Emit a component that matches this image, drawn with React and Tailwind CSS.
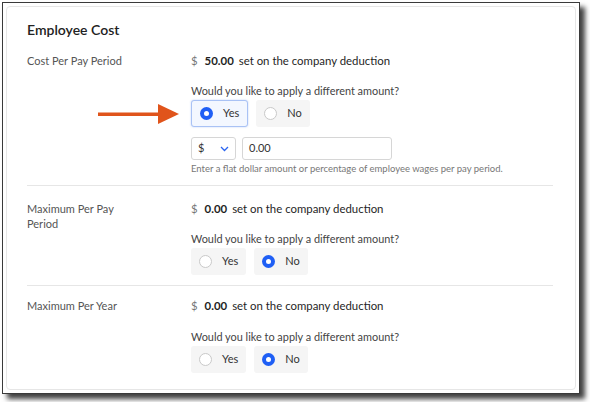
import React from "react";

const sections = [
  { label: "Cost Per Pay Period", amount: "50.00", choice: "yes", custom: true },
  { label: "Maximum Per Pay Period", amount: "0.00", choice: "no" },
  { label: "Maximum Per Year", amount: "0.00", choice: "no" },
];

function Radio({ checked }) {
  return checked ? (
    <span className="w-[13px] h-[13px] rounded-full bg-[#1f5ff5] flex items-center justify-center">
      <span className="w-[5px] h-[5px] rounded-full bg-white"></span>
    </span>
  ) : (
    <span className="w-[13px] h-[13px] rounded-full border border-[#c9c9c9] bg-white"></span>
  );
}

function Option({ text, checked, focused }) {
  return (
    <div
      className={`h-[27px] flex items-center gap-[10px] rounded-[3px] ${
        focused
          ? "pl-[8px] pr-[8px] bg-[#f3f7ff] border border-[#a9c2f5] shadow-[0_0_2px_rgba(60,110,230,0.35)]"
          : "pl-[8px] pr-[8px] bg-[#f5f5f5]"
      }`}
    >
      <Radio checked={checked} />
      <span className="text-[11px] text-[#333]">{text}</span>
    </div>
  );
}

function Section({ s, first, last }) {
  return (
    <div
      className={`flex ${first ? "pt-[14px]" : last ? "pt-[12px]" : "pt-[15px]"} pb-[10px] ${
        last ? "" : "border-b border-[#e6e6e6]"
      }`}
    >
      <div className="w-[164px] text-[11px] leading-[15px] text-[#555] pr-[60px]">{s.label}</div>
      <div className="flex-1">
        <div className="flex items-center h-[15px] text-[11.4px] text-[#1f1f1f]">
          <span className="text-[#777] mr-[7px]">$</span>
          <span className="font-bold mr-[5px]">{s.amount}</span>
          <span>set on the company deduction</span>
        </div>
        <div className={`${last ? "mt-[17px]" : "mt-[16px]"} text-[10.9px] text-[#444] leading-[14px]`}>
          Would you like to apply a different amount?
        </div>
        <div className="mt-[2px] flex gap-[8px]">
          <Option text="Yes" checked={s.choice === "yes"} focused={s.choice === "yes"} />
          <Option text="No" checked={s.choice === "no"} />
        </div>
        {s.custom && (
          <div className="mt-[10px]">
            <div className="flex gap-[6px]">
              <div className="w-[45px] h-[23px] border border-[#d6d6d6] rounded-[3px] flex items-center justify-between px-[6px] text-[11px] text-[#333]">
                <span>$</span>
                <svg width="9" height="6" viewBox="0 0 9 6" fill="none">
                  <path d="M1 1l3.5 3.5L8 1" stroke="#2a64f0" strokeWidth="1.3" />
                </svg>
              </div>
              <div className="w-[150px] h-[23px] border border-[#d6d6d6] rounded-[3px] flex items-center px-[6px] text-[11px] text-[#333]">0.00</div>
            </div>
            <div className="mt-[2px] text-[9.5px] leading-[13px] text-[#777]">
              Enter a flat dollar amount or percentage of employee wages per pay period.
            </div>
          </div>
        )}
      </div>
    </div>
  );
}

export default function App() {
  return (
    <div className="w-[590px] h-[402px] bg-white pl-[2px] pt-[2px] font-['Lato','Liberation_Sans',sans-serif]">
      <div className="relative w-[578px] h-[392px] border border-[#3a3a3a] bg-white p-[3px] shadow-[5px_5px_5px_rgba(0,0,0,0.75)]">
        <div className="h-full border border-[#e6e6e6] rounded-[4px] pl-[20px] pr-[22px] pt-[14px]">
          <h1 className="text-[14px] font-semibold text-[#222] leading-[18px]">Employee Cost</h1>
          {sections.map((s, i) => (
            <Section key={s.label} s={s} first={i === 0} last={i === sections.length - 1} />
          ))}
        </div>
        <svg className="absolute left-[95px] top-[101px]" width="82" height="20" viewBox="0 0 82 20">
          <rect x="0" y="8.5" width="62" height="3.5" fill="#e0541b" />
          <path d="M60 0L81 10L60 20Z" fill="#e0541b" />
        </svg>
      </div>
    </div>
  );
}
